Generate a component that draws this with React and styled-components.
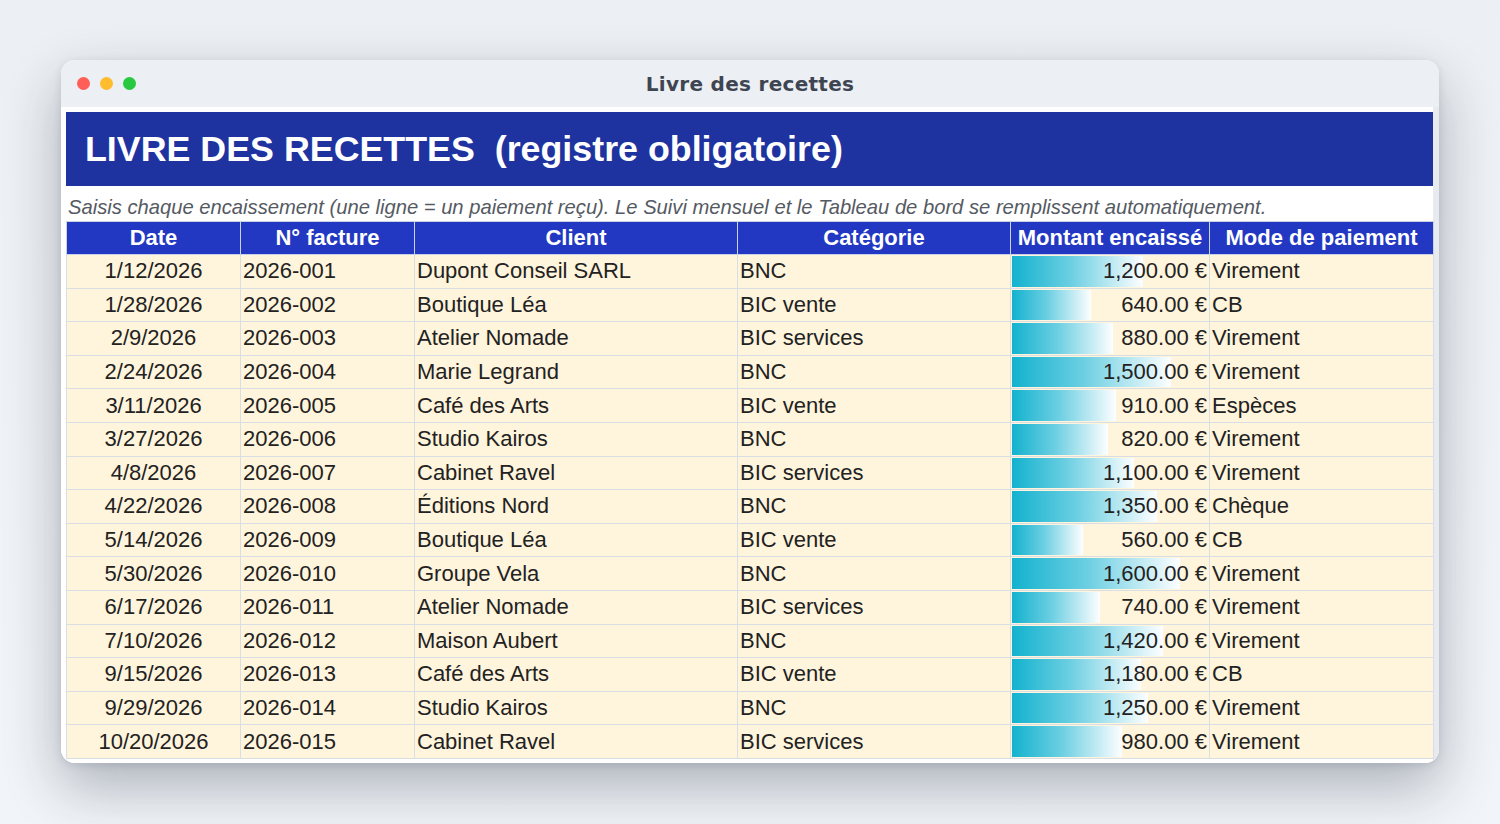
import styled, { createGlobalStyle } from 'styled-components';

const GlobalStyle = createGlobalStyle`
  * { box-sizing: border-box; }
  html, body {
    margin: 0;
    padding: 0;
    background: linear-gradient(180deg, #eceff3 0%, #f1f4f8 100%);
    font-family: 'Liberation Sans', Arial, sans-serif;
  }
`;

const rows = [
  ['1/12/2026', '2026-001', 'Dupont Conseil SARL', 'BNC', 1200, 'Virement'],
  ['1/28/2026', '2026-002', 'Boutique Léa', 'BIC vente', 640, 'CB'],
  ['2/9/2026', '2026-003', 'Atelier Nomade', 'BIC services', 880, 'Virement'],
  ['2/24/2026', '2026-004', 'Marie Legrand', 'BNC', 1500, 'Virement'],
  ['3/11/2026', '2026-005', 'Café des Arts', 'BIC vente', 910, 'Espèces'],
  ['3/27/2026', '2026-006', 'Studio Kairos', 'BNC', 820, 'Virement'],
  ['4/8/2026', '2026-007', 'Cabinet Ravel', 'BIC services', 1100, 'Virement'],
  ['4/22/2026', '2026-008', 'Éditions Nord', 'BNC', 1350, 'Chèque'],
  ['5/14/2026', '2026-009', 'Boutique Léa', 'BIC vente', 560, 'CB'],
  ['5/30/2026', '2026-010', 'Groupe Vela', 'BNC', 1600, 'Virement'],
  ['6/17/2026', '2026-011', 'Atelier Nomade', 'BIC services', 740, 'Virement'],
  ['7/10/2026', '2026-012', 'Maison Aubert', 'BNC', 1420, 'Virement'],
  ['9/15/2026', '2026-013', 'Café des Arts', 'BIC vente', 1180, 'CB'],
  ['9/29/2026', '2026-014', 'Studio Kairos', 'BNC', 1250, 'Virement'],
  ['10/20/2026', '2026-015', 'Cabinet Ravel', 'BIC services', 980, 'Virement'],
];

const columns = [
  { label: 'Date', width: 174 },
  { label: 'N° facture', width: 174 },
  { label: 'Client', width: 323 },
  { label: 'Catégorie', width: 273 },
  { label: 'Montant encaissé', width: 199 },
  { label: 'Mode de paiement', width: 224 },
];

const formatAmount = (v) =>
  v.toLocaleString('en-US', { minimumFractionDigits: 2, maximumFractionDigits: 2 }) + ' €';

function App() {
  return (
    <>
      <GlobalStyle />
      <Page>
        <Window>
          <TitleBar>
            <Dots>
              <Dot color="#ff5f57" />
              <Dot color="#febc2e" />
              <Dot color="#28c840" />
            </Dots>
            <WindowTitle>Livre des recettes</WindowTitle>
          </TitleBar>
          <Body>
            <Banner>LIVRE DES RECETTES  (registre obligatoire)</Banner>
            <Hint>
              Saisis chaque encaissement (une ligne = un paiement reçu). Le Suivi mensuel et le
              Tableau de bord se remplissent automatiquement.
            </Hint>
            <Table>
              <colgroup>
                {columns.map((c) => (
                  <col key={c.label} style={{ width: c.width }} />
                ))}
              </colgroup>
              <thead>
                <tr>
                  {columns.map((c) => (
                    <Th key={c.label}>{c.label}</Th>
                  ))}
                </tr>
              </thead>
              <tbody>
                {rows.map((r) => (
                  <tr key={r[1]}>
                    <Td align="center">{r[0]}</Td>
                    <Td>{r[1]}</Td>
                    <Td>{r[2]}</Td>
                    <Td>{r[3]}</Td>
                    <AmountCell>
                      <Bar style={{ width: Math.round(19 + r[4] * 0.0933) }} />
                      <AmountText>{formatAmount(r[4])}</AmountText>
                    </AmountCell>
                    <Td>{r[5]}</Td>
                  </tr>
                ))}
              </tbody>
            </Table>
          </Body>
        </Window>
      </Page>
    </>
  );
}

const Page = styled.div`
  width: 1500px;
  height: 824px;
  padding: 60px 61px 0 61px;
`;

const Window = styled.div`
  width: 1378px;
  height: 703px;
  border-radius: 14px;
  overflow: hidden;
  background: #ffffff;
  box-shadow:
    0 24px 56px rgba(30, 40, 60, 0.32),
    0 2px 8px rgba(30, 40, 60, 0.12);
  display: flex;
  flex-direction: column;
`;

const TitleBar = styled.div`
  position: relative;
  height: 47px;
  flex-shrink: 0;
  background: #eceff3;
  display: flex;
  align-items: center;
  justify-content: center;
`;

const Dots = styled.div`
  position: absolute;
  left: 16px;
  top: 17px;
  display: flex;
  gap: 10px;
`;

const Dot = styled.span`
  width: 13px;
  height: 13px;
  border-radius: 50%;
  background: ${({ color }) => color};
`;

const WindowTitle = styled.div`
  font-family: 'DejaVu Sans', sans-serif;
  font-weight: bold;
  font-size: 20px;
  color: #3d4552;
  letter-spacing: 0.3px;
`;

const Body = styled.div`
  flex: 1;
  padding: 5px 0 5px 5px;
  border-right: 6px solid #e7eaef;
  background: #ffffff;
`;

const Banner = styled.div`
  height: 74px;
  background: #1f33a0;
  color: #ffffff;
  font-weight: bold;
  font-size: 35.8px;
  white-space: pre;
  display: flex;
  align-items: center;
  padding-left: 19px;
`;

const Hint = styled.div`
  height: 35px;
  padding: 10px 0 0 2px;
  font-style: italic;
  font-size: 20.2px;
  color: #555a62;
  white-space: nowrap;
  line-height: 22px;
`;

const Table = styled.table`
  border-collapse: collapse;
  table-layout: fixed;
  width: 1367px;
  font-size: 22px;
  color: #222222;
`;

const Th = styled.th`
  height: 33px;
  padding: 0 2px;
  background: #2238c2;
  color: #ffffff;
  font-weight: bold;
  text-align: center;
  border: 1px solid #c9d3e6;
  white-space: nowrap;
  line-height: 24px;
`;

const Td = styled.td`
  height: 33.6px;
  padding: 0 2px;
  background: #fff4dc;
  border: 1px solid #d9dde4;
  text-align: ${({ align }) => align || 'left'};
  white-space: nowrap;
  line-height: 24px;
`;

const AmountCell = styled(Td)`
  position: relative;
  text-align: right;
`;

const Bar = styled.span`
  position: absolute;
  left: 1px;
  top: 1px;
  bottom: 1px;
  background: linear-gradient(90deg, #13b2cf 0%, #6ccfe2 45%, #fdfeff 100%);
`;

const AmountText = styled.span`
  position: relative;
`;

export default App;
